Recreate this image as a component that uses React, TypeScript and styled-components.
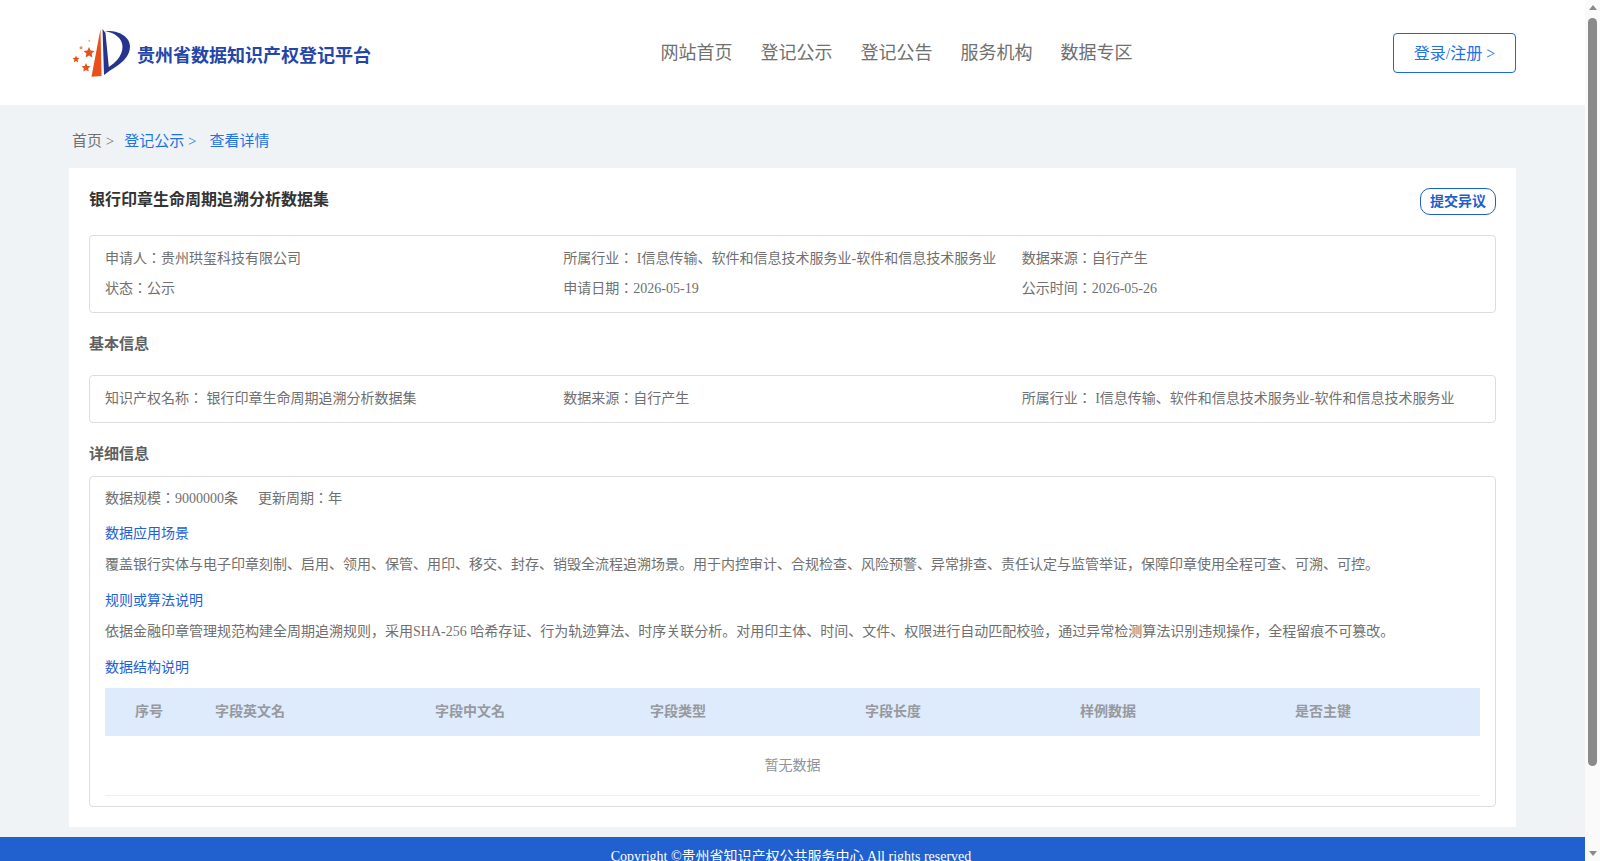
import styled, { createGlobalStyle } from 'styled-components';

const GlobalStyle = createGlobalStyle`
  html, body {
    margin: 0;
    padding: 0;
    height: 100%;
    overflow: hidden;
    background: #eff3f6;
    font-family: "Liberation Serif", "Noto Sans CJK JP", serif;
    color: #666;
  }
  * {
    box-sizing: border-box;
  }
`;

const columns = ['字段英文名', '字段中文名', '字段类型', '字段长度', '样例数据', '是否主键'];

function Logo() {
  return (
    <svg width="60" height="52" viewBox="0 0 60 52" aria-hidden="true">
      <path d="M28.500 2 L19.500 49.700 L29.500 49 Z" fill="#ea4e1a" />
      <path d="M30.500 2 L32 48 L38 43.500 C49 37 58 30 58 19.500 C58 9 46 3 33 4 C43 6 50.500 11 50.500 20 C50.500 29 43 36 36.800 40 L33.500 6 Z" fill="#27348f" />
      <path d="M17 20 l1.600 3.600 3.900.4-2.900 2.600.8 3.800-3.400-2-3.400 2 .8-3.800-2.900-2.600 3.900-.4Z" fill="#ea4e1a" />
      <path d="M4 28.500 l1 2.300 2.500.3-1.900 1.700.5 2.500-2.100-1.300-2.100 1.300.5-2.500-1.900-1.700 2.500-.3Z" fill="#ea4e1a" />
      <path d="M14 36 l1.300 3 3.200.3-2.400 2.100.7 3.100-2.800-1.600-2.800 1.600.7-3.100-2.400-2.100 3.200-.3Z" fill="#ea4e1a" />
      <circle cx="9" cy="20.700" r="1.500" fill="#f08a60" />
      <circle cx="17.300" cy="13.700" r="1" fill="#f4a584" />
    </svg>
  );
}

export default function App() {
  return (
    <Shell>
      <GlobalStyle />
      <Viewport>
        <Header>
          <Brand>
            <Logo />
            <BrandName>贵州省数据知识产权登记平台</BrandName>
          </Brand>
          <Nav>
            <NavItem>网站首页</NavItem>
            <NavItem>登记公示</NavItem>
            <NavItem>登记公告</NavItem>
            <NavItem>服务机构</NavItem>
            <NavItem>数据专区</NavItem>
          </Nav>
          <LoginButton>登录/注册 &gt;</LoginButton>
        </Header>

        <Main>
          <Crumbs>
            <span>首页 &gt;</span>
            <CrumbLink>登记公示 &gt;</CrumbLink>
            <CrumbLink>查看详情</CrumbLink>
          </Crumbs>

          <Card>
            <TitleRow>
              <Title>银行印章生命周期追溯分析数据集</Title>
              <ObjectionButton>提交异议</ObjectionButton>
            </TitleRow>

            <InfoBox>
              <InfoGrid>
                <span>申请人：贵州珙玺科技有限公司</span>
                <span>所属行业： I信息传输、软件和信息技术服务业-软件和信息技术服务业</span>
                <span>数据来源：自行产生</span>
                <span>状态：公示</span>
                <span>申请日期：2026-05-19</span>
                <span>公示时间：2026-05-26</span>
              </InfoGrid>
            </InfoBox>

            <SectionTitle>基本信息</SectionTitle>
            <InfoBox>
              <InfoGrid>
                <span>知识产权名称： 银行印章生命周期追溯分析数据集</span>
                <span>数据来源：自行产生</span>
                <span>所属行业： I信息传输、软件和信息技术服务业-软件和信息技术服务业</span>
              </InfoGrid>
            </InfoBox>

            <SectionTitle $compact>详细信息</SectionTitle>
            <DetailBox>
              <MetaRow>
                <span>数据规模：9000000条</span>
                <span>更新周期：年</span>
              </MetaRow>
              <SubTitle>数据应用场景</SubTitle>
              <Paragraph>
                覆盖银行实体与电子印章刻制、启用、领用、保管、用印、移交、封存、销毁全流程追溯场景。用于内控审计、合规检查、风险预警、异常排查、责任认定与监管举证，保障印章使用全程可查、可溯、可控。
              </Paragraph>
              <SubTitle>规则或算法说明</SubTitle>
              <Paragraph>
                依据金融印章管理规范构建全周期追溯规则，采用SHA-256 哈希存证、行为轨迹算法、时序关联分析。对用印主体、时间、文件、权限进行自动匹配校验，通过异常检测算法识别违规操作，全程留痕不可篡改。
              </Paragraph>
              <SubTitle>数据结构说明</SubTitle>
              <TableHead>
                <span>序号</span>
                {columns.map((c) => (
                  <span key={c}>{c}</span>
                ))}
              </TableHead>
              <EmptyRow>暂无数据</EmptyRow>
            </DetailBox>
          </Card>
        </Main>

        <Footer>Copyright ©贵州省知识产权公共服务中心 All rights reserved</Footer>
      </Viewport>

      <ScrollTrack>
        <ScrollArrow $up />
        <ScrollThumb />
        <ScrollArrow />
      </ScrollTrack>
    </Shell>
  );
}

const Shell = styled.div`
  display: flex;
  height: 100vh;
  overflow: hidden;
`;

const Viewport = styled.div`
  flex: 1;
  min-width: 0;
  height: 100vh;
  overflow: hidden;
`;

const ScrollTrack = styled.div`
  display: flex;
  flex-direction: column;
  align-items: center;
  width: 15px;
  height: 100%;
  background: #fafafa;
`;

const ScrollArrow = styled.div<{ $up?: boolean }>`
  flex: none;
  width: 0;
  height: 0;
  margin: ${(p) => (p.$up ? '5px 0 8px' : '0 0 5px')};
  border-left: 4.5px solid transparent;
  border-right: 4.5px solid transparent;
  ${(p) => (p.$up ? 'border-bottom: 5px solid #8a8a8a;' : 'border-top: 5px solid #8a8a8a;')}
`;

const ScrollThumb = styled.div`
  flex: none;
  width: 9px;
  height: 748px;
  margin-bottom: auto;
  border-radius: 5px;
  background: #8a8a8a;
`;

const Header = styled.header`
  display: flex;
  align-items: center;
  justify-content: space-between;
  height: 105px;
  padding: 0 69px 0 72px;
  background: #fff;
`;

const Brand = styled.div`
  display: flex;
  align-items: center;
  gap: 5px;
  width: 328px;
`;

const BrandName = styled.h1`
  margin: 2px 0 0;
  font-size: 18px;
  font-weight: 700;
  white-space: nowrap;
  color: #2446ab;
`;

const Nav = styled.nav`
  display: flex;
  gap: 28px;
  padding-bottom: 3px;
`;

const NavItem = styled.a`
  font-size: 18px;
  color: #707070;
`;

const LoginButton = styled.button`
  width: 123px;
  height: 40px;
  padding: 0 0 2px;
  border: 1px solid #1d69e0;
  border-radius: 4px;
  background: #fff;
  color: #2272e6;
  font-family: inherit;
  font-size: 16px;
`;

const Main = styled.main`
  padding: 0 69px 10px;
`;

const Crumbs = styled.div`
  display: flex;
  gap: 10px;
  height: 63px;
  padding: 26px 3px 0;
  font-size: 15px;
  line-height: 20px;
  color: #707070;
`;

const CrumbLink = styled.a`
  margin-right: 3px;
  color: #2272e6;
`;

const Card = styled.section`
  padding: 20px;
  background: #fff;
`;

const TitleRow = styled.div`
  display: flex;
  align-items: flex-start;
  justify-content: space-between;
  height: 47px;
`;

const Title = styled.h2`
  margin: 0;
  font-size: 16px;
  line-height: 24px;
  font-weight: 700;
  color: #333;
`;

const ObjectionButton = styled.button`
  width: 76px;
  height: 27px;
  padding: 0 0 3px;
  border: 1px solid #1d5fcc;
  border-radius: 10px;
  background: #fff;
  color: #1d5fcc;
  font-family: inherit;
  font-size: 14px;
  font-weight: 700;
`;

const InfoBox = styled.div`
  padding: 8px 15px;
  border: 1px solid #ddd;
  border-radius: 4px;
`;

const InfoGrid = styled.div`
  display: grid;
  grid-template-columns: repeat(3, 1fr);
  font-size: 14px;
  line-height: 30px;
  color: #707070;
`;

const SectionTitle = styled.h3<{ $compact?: boolean }>`
  margin: 0;
  height: ${(p) => (p.$compact ? '53px' : '62px')};
  padding-top: 21px;
  font-size: 15px;
  line-height: 20px;
  font-weight: 700;
  color: #606060;
`;

const DetailBox = styled.div`
  padding: 11px 15px 10px;
  border: 1px solid #ddd;
  border-radius: 4px;
  font-size: 14px;
  line-height: 22px;
  color: #707070;
`;

const MetaRow = styled.div`
  display: flex;
  gap: 20px;
  margin-bottom: 13px;
`;

const SubTitle = styled.div`
  margin-bottom: 9px;
  color: #1d62d6;
`;

const Paragraph = styled.p`
  margin: 0 0 14px;
`;

const TableHead = styled.div`
  display: grid;
  grid-template-columns: 80px 220px repeat(5, 215px);
  height: 48px;
  align-items: center;
  background: #deebfc;
  font-weight: 700;
  color: #97999e;

  span {
    padding-left: 30px;
  }
`;

const EmptyRow = styled.div`
  display: flex;
  align-items: center;
  justify-content: center;
  height: 60px;
  border-bottom: 1px solid #ebeef5;
  color: #909399;
`;

const Footer = styled.footer`
  height: 113px;
  padding: 10px 3px 0 0;
  background: #2060cf;
  font-size: 14px;
  line-height: 20px;
  text-align: center;
  color: #fff;
`;
